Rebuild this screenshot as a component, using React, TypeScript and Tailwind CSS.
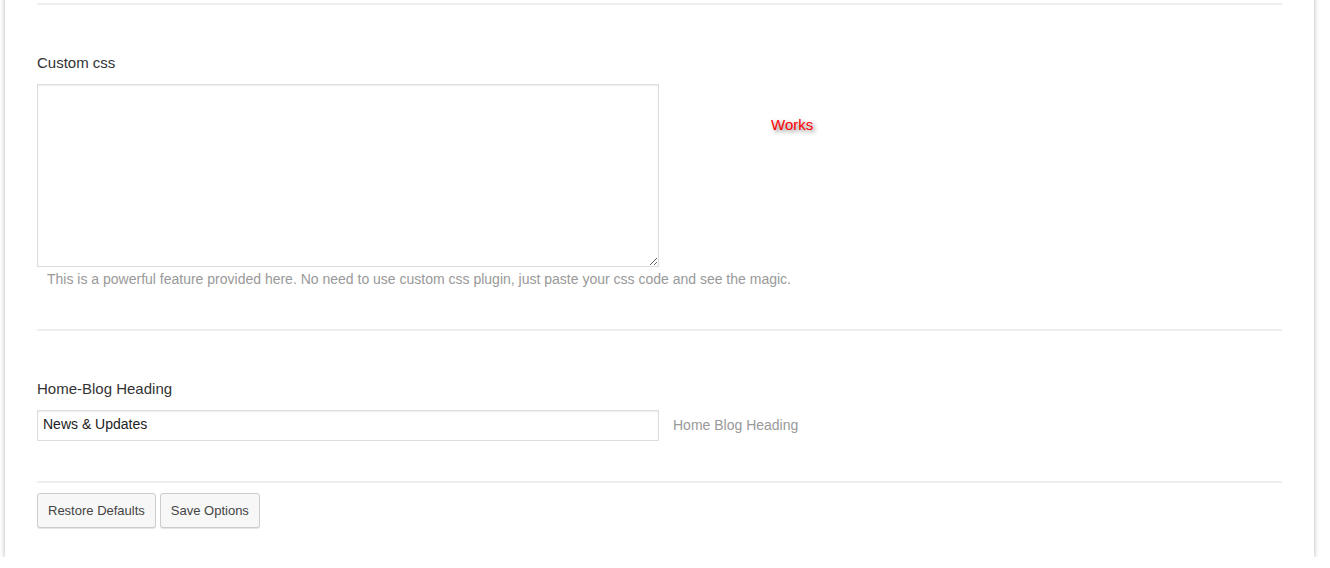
export default function App() {
  return (
    <div className="min-h-[568px] bg-white font-['Liberation_Sans',Arial,sans-serif] pl-[5px]">
      <div className="-mt-[20px] w-[1309px] bg-white pt-[23px] pb-[29px] px-[32px] shadow-[0_1px_5px_rgba(0,0,0,0.3)]">
        {/* Custom css */}
        <div className="border-t-2 border-[#eeeeee] pt-[47px] pb-[40px]">
          <label className="block text-[15px] leading-[21px] text-[#333]">Custom css</label>
          <div className="mt-[11px] flex items-start">
            <textarea className="block h-[183px] w-[622px] border border-[#dddddd] bg-white shadow-[inset_0_1px_2px_rgba(0,0,0,0.07)] outline-none" />
            <span className="ml-[112px] mt-[31px] text-[15px] leading-[20px] text-[#ff0000] [text-shadow:2px_2px_4px_rgba(0,0,0,0.55)]">
              Works
            </span>
          </div>
          <p className="mt-[2px] pl-[10px] text-[14px] leading-[20px] text-[#999]">
            This is a powerful feature provided here. No need to use custom css plugin, just paste your css code and see the magic.
          </p>
        </div>

        {/* Home-Blog Heading */}
        <div className="border-t-2 border-[#eeeeee] pt-[47px] pb-[40px]">
          <label className="block text-[15px] leading-[21px] text-[#333]">Home-Blog Heading</label>
          <div className="mt-[11px] flex items-center">
            <input
              type="text"
              defaultValue="News & Updates"
              className="h-[31px] w-[622px] border border-[#dddddd] bg-white px-[5px] pb-[3px] text-[14px] text-[#222] shadow-[inset_0_1px_2px_rgba(0,0,0,0.07)] outline-none"
            />
            <span className="ml-[14px] -mt-[1px] text-[14px] text-[#999]">Home Blog Heading</span>
          </div>
        </div>

        {/* Actions */}
        <div className="flex gap-[4px] border-t-2 border-[#eeeeee] pt-[10px]">
          <button className="h-[35px] rounded-[3px] border border-[#cccccc] bg-[#f7f7f7] px-[10px] text-[13px] text-[#444] shadow-[0_1px_0_#e5e5e5]">
            Restore Defaults
          </button>
          <button className="h-[35px] rounded-[3px] border border-[#cccccc] bg-[#f7f7f7] px-[10px] text-[13px] text-[#444] shadow-[0_1px_0_#e5e5e5]">
            Save Options
          </button>
        </div>
      </div>
    </div>
  );
}
